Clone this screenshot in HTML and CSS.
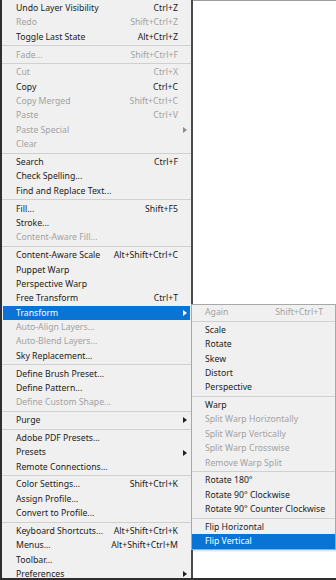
FILE: index.html
```html
<!DOCTYPE html>
<html lang="en">
<head>
    <meta charset="UTF-8">
    <meta name="viewport" content="width=device-width, initial-scale=1.0">
    <title>Edit Menu</title>
    <link rel="stylesheet" href="styles.css">
</head>
<body>
    <div class="screen">
        <ul class="menu main">
            <li class="item"><span class="label">Undo Layer Visibility</span><span class="key">Ctrl+Z</span><span class="arrow"></span></li>
            <li class="item off"><span class="label">Redo</span><span class="key">Shift+Ctrl+Z</span><span class="arrow"></span></li>
            <li class="item"><span class="label">Toggle Last State</span><span class="key">Alt+Ctrl+Z</span><span class="arrow"></span></li>
            <li class="sep"></li>
            <li class="item off"><span class="label">Fade...</span><span class="key">Shift+Ctrl+F</span><span class="arrow"></span></li>
            <li class="sep"></li>
            <li class="item off"><span class="label">Cut</span><span class="key">Ctrl+X</span><span class="arrow"></span></li>
            <li class="item"><span class="label">Copy</span><span class="key">Ctrl+C</span><span class="arrow"></span></li>
            <li class="item off"><span class="label">Copy Merged</span><span class="key">Shift+Ctrl+C</span><span class="arrow"></span></li>
            <li class="item off"><span class="label">Paste</span><span class="key">Ctrl+V</span><span class="arrow"></span></li>
            <li class="item off more"><span class="label">Paste Special</span><span class="key"></span><span class="arrow"></span></li>
            <li class="item off"><span class="label">Clear</span><span class="key"></span><span class="arrow"></span></li>
            <li class="sep"></li>
            <li class="item"><span class="label">Search</span><span class="key">Ctrl+F</span><span class="arrow"></span></li>
            <li class="item"><span class="label">Check Spelling...</span><span class="key"></span><span class="arrow"></span></li>
            <li class="item"><span class="label">Find and Replace Text...</span><span class="key"></span><span class="arrow"></span></li>
            <li class="sep"></li>
            <li class="item"><span class="label">Fill...</span><span class="key">Shift+F5</span><span class="arrow"></span></li>
            <li class="item"><span class="label">Stroke...</span><span class="key"></span><span class="arrow"></span></li>
            <li class="item off"><span class="label">Content-Aware Fill...</span><span class="key"></span><span class="arrow"></span></li>
            <li class="sep"></li>
            <li class="item"><span class="label">Content-Aware Scale</span><span class="key">Alt+Shift+Ctrl+C</span><span class="arrow"></span></li>
            <li class="item"><span class="label">Puppet Warp</span><span class="key"></span><span class="arrow"></span></li>
            <li class="item"><span class="label">Perspective Warp</span><span class="key"></span><span class="arrow"></span></li>
            <li class="item"><span class="label">Free Transform</span><span class="key">Ctrl+T</span><span class="arrow"></span></li>
            <li class="item more active"><span class="label">Transform</span><span class="key"></span><span class="arrow"></span></li>
            <li class="item off"><span class="label">Auto-Align Layers...</span><span class="key"></span><span class="arrow"></span></li>
            <li class="item off"><span class="label">Auto-Blend Layers...</span><span class="key"></span><span class="arrow"></span></li>
            <li class="item"><span class="label">Sky Replacement...</span><span class="key"></span><span class="arrow"></span></li>
            <li class="sep"></li>
            <li class="item"><span class="label">Define Brush Preset...</span><span class="key"></span><span class="arrow"></span></li>
            <li class="item"><span class="label">Define Pattern...</span><span class="key"></span><span class="arrow"></span></li>
            <li class="item off"><span class="label">Define Custom Shape...</span><span class="key"></span><span class="arrow"></span></li>
            <li class="sep"></li>
            <li class="item more"><span class="label">Purge</span><span class="key"></span><span class="arrow"></span></li>
            <li class="sep"></li>
            <li class="item"><span class="label">Adobe PDF Presets...</span><span class="key"></span><span class="arrow"></span></li>
            <li class="item more"><span class="label">Presets</span><span class="key"></span><span class="arrow"></span></li>
            <li class="item"><span class="label">Remote Connections...</span><span class="key"></span><span class="arrow"></span></li>
            <li class="sep"></li>
            <li class="item"><span class="label">Color Settings...</span><span class="key">Shift+Ctrl+K</span><span class="arrow"></span></li>
            <li class="item"><span class="label">Assign Profile...</span><span class="key"></span><span class="arrow"></span></li>
            <li class="item"><span class="label">Convert to Profile...</span><span class="key"></span><span class="arrow"></span></li>
            <li class="sep"></li>
            <li class="item"><span class="label">Keyboard Shortcuts...</span><span class="key">Alt+Shift+Ctrl+K</span><span class="arrow"></span></li>
            <li class="item"><span class="label">Menus...</span><span class="key">Alt+Shift+Ctrl+M</span><span class="arrow"></span></li>
            <li class="item"><span class="label">Toolbar...</span><span class="key"></span><span class="arrow"></span></li>
            <li class="item more"><span class="label">Preferences</span><span class="key"></span><span class="arrow"></span></li>
        </ul>

        <div class="canvas"></div>

        <!-- Transform submenu -->
        <ul class="menu sub">
            <li class="item off"><span class="label">Again</span><span class="key">Shift+Ctrl+T</span><span class="arrow"></span></li>
            <li class="sep"></li>
            <li class="item"><span class="label">Scale</span><span class="key"></span><span class="arrow"></span></li>
            <li class="item"><span class="label">Rotate</span><span class="key"></span><span class="arrow"></span></li>
            <li class="item"><span class="label">Skew</span><span class="key"></span><span class="arrow"></span></li>
            <li class="item"><span class="label">Distort</span><span class="key"></span><span class="arrow"></span></li>
            <li class="item"><span class="label">Perspective</span><span class="key"></span><span class="arrow"></span></li>
            <li class="sep"></li>
            <li class="item"><span class="label">Warp</span><span class="key"></span><span class="arrow"></span></li>
            <li class="item off"><span class="label">Split Warp Horizontally</span><span class="key"></span><span class="arrow"></span></li>
            <li class="item off"><span class="label">Split Warp Vertically</span><span class="key"></span><span class="arrow"></span></li>
            <li class="item off"><span class="label">Split Warp Crosswise</span><span class="key"></span><span class="arrow"></span></li>
            <li class="item off"><span class="label">Remove Warp Split</span><span class="key"></span><span class="arrow"></span></li>
            <li class="sep"></li>
            <li class="item"><span class="label">Rotate 180°</span><span class="key"></span><span class="arrow"></span></li>
            <li class="item"><span class="label">Rotate 90° Clockwise</span><span class="key"></span><span class="arrow"></span></li>
            <li class="item"><span class="label">Rotate 90° Counter Clockwise</span><span class="key"></span><span class="arrow"></span></li>
            <li class="sep"></li>
            <li class="item"><span class="label">Flip Horizontal</span><span class="key"></span><span class="arrow"></span></li>
            <li class="item active"><span class="label">Flip Vertical</span><span class="key"></span><span class="arrow"></span></li>
        </ul>
    </div>
</body>
</html>
```

FILE: styles.css
```css
body {
    margin: 0;
    font-family: "Noto Sans", "Open Sans", sans-serif;
    font-size: 8.7px;
    color: #1b1b1b;
    background: #fff;
}
.screen {
    position: relative;
    width: 336px;
    height: 580px;
    display: flex;
    box-sizing: border-box;
    border-left: 2px solid #2e2e2e;
    border-bottom: 2px solid #2e2e2e;
    overflow: hidden;
}
.menu {
    list-style: none;
    margin: 0;
    padding: 0;
    background: #f0f0f0;
}
.main {
    width: 191px;
    flex-shrink: 0;
    box-sizing: border-box;
    padding-top: 1px;
    border-right: 2px solid #4a4a4a;
}
.canvas {
    flex: 1;
    background: #fff;
    border-top: 1px solid #9c9c9c;
}
.item {
    display: grid;
    grid-template-columns: 1fr auto 12px;
    align-items: center;
    height: 14.4px;
    line-height: 14.4px;
    margin: 0 1px;
    padding-left: 13px;
    white-space: nowrap;
}
.item.off {
    color: #a2a2a2;
}
.item.active {
    background: #0a74d4;
    color: #fff;
}
.arrow {
    width: 0;
    height: 0;
    margin-left: 5px;
}
.more .arrow {
    border-left: 4px solid #1e1e1e;
    border-top: 3.5px solid transparent;
    border-bottom: 3.5px solid transparent;
}
.more.off .arrow {
    border-left-color: #8c8c8c;
}
.more.active .arrow {
    border-left-color: #fff;
}
.sep {
    height: 1px;
    margin: 1.2px 0 1.2px;
    background: #d0d0d0;
}
.sub {
    position: absolute;
    left: 189px;
    top: 304px;
    width: 143px;
    border: 1px solid #a8a8a8;
    box-shadow: 1px 1px 2px rgba(0, 0, 0, 0.15);
}
.sub .item {
    margin: 0;
}
```
